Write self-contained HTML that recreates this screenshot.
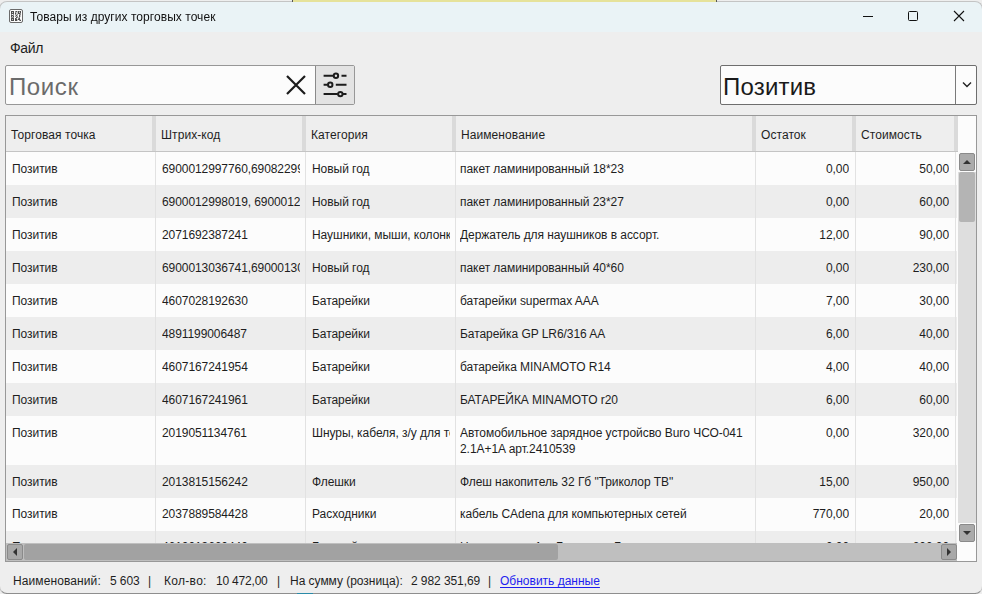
<!DOCTYPE html>
<html><head><meta charset="utf-8">
<style>
*{margin:0;padding:0;box-sizing:border-box}
html,body{width:982px;height:594px;overflow:hidden;background:#eeeeee}
body{font-family:"Liberation Sans",sans-serif;font-size:12px;color:#1e1e1e;position:relative;letter-spacing:0.08px}
.a{position:absolute}
.t{position:absolute;white-space:nowrap;line-height:14px}
.c{position:absolute;white-space:nowrap;overflow:hidden;line-height:16px}
.r{text-align:right}
.d{letter-spacing:-0.08px}
.e{letter-spacing:-0.05px}
</style></head><body>

<div class="a" style="left:0;top:0;width:982px;height:593px;background:#eeeeee;overflow:hidden">
<div class="a" style="left:0;top:0;width:982px;height:32px;background:#eaf3f6"></div>
<svg class="a" style="left:9px;top:9px" width="14" height="14" viewBox="0 0 14 14" shape-rendering="crispEdges"><rect x="0.5" y="0.5" width="13" height="13" rx="1.5" fill="#fbfbfb" stroke="#6a6a6a" shape-rendering="auto"/><rect x="2" y="2" width="1" height="1" fill="#4e4e4e"/><rect x="3" y="2" width="1" height="1" fill="#4e4e4e"/><rect x="4" y="2" width="1" height="1" fill="#4e4e4e"/><rect x="6" y="2" width="1" height="1" fill="#8c8c8c"/><rect x="7" y="2" width="1" height="1" fill="#4e4e4e"/><rect x="8" y="2" width="1" height="1" fill="#c4c4c4"/><rect x="9" y="2" width="1" height="1" fill="#4e4e4e"/><rect x="10" y="2" width="1" height="1" fill="#8c8c8c"/><rect x="11" y="2" width="1" height="1" fill="#4e4e4e"/><rect x="2" y="3" width="1" height="1" fill="#4e4e4e"/><rect x="3" y="3" width="1" height="1" fill="#c4c4c4"/><rect x="4" y="3" width="1" height="1" fill="#4e4e4e"/><rect x="6" y="3" width="1" height="1" fill="#8c8c8c"/><rect x="7" y="3" width="1" height="1" fill="#c4c4c4"/><rect x="8" y="3" width="1" height="1" fill="#c4c4c4"/><rect x="9" y="3" width="1" height="1" fill="#4e4e4e"/><rect x="10" y="3" width="1" height="1" fill="#c4c4c4"/><rect x="11" y="3" width="1" height="1" fill="#4e4e4e"/><rect x="2" y="4" width="1" height="1" fill="#4e4e4e"/><rect x="3" y="4" width="1" height="1" fill="#4e4e4e"/><rect x="4" y="4" width="1" height="1" fill="#4e4e4e"/><rect x="6" y="4" width="1" height="1" fill="#4e4e4e"/><rect x="7" y="4" width="1" height="1" fill="#c4c4c4"/><rect x="8" y="4" width="1" height="1" fill="#c4c4c4"/><rect x="9" y="4" width="1" height="1" fill="#4e4e4e"/><rect x="10" y="4" width="1" height="1" fill="#4e4e4e"/><rect x="11" y="4" width="1" height="1" fill="#8c8c8c"/><rect x="2" y="5" width="1" height="1" fill="#8c8c8c"/><rect x="4" y="5" width="1" height="1" fill="#8c8c8c"/><rect x="6" y="5" width="1" height="1" fill="#8c8c8c"/><rect x="7" y="5" width="1" height="1" fill="#c4c4c4"/><rect x="8" y="5" width="1" height="1" fill="#8c8c8c"/><rect x="10" y="5" width="1" height="1" fill="#8c8c8c"/><rect x="11" y="5" width="1" height="1" fill="#8c8c8c"/><rect x="2" y="6" width="1" height="1" fill="#4e4e4e"/><rect x="3" y="6" width="1" height="1" fill="#4e4e4e"/><rect x="4" y="6" width="1" height="1" fill="#8c8c8c"/><rect x="6" y="6" width="1" height="1" fill="#c4c4c4"/><rect x="7" y="6" width="1" height="1" fill="#4e4e4e"/><rect x="8" y="6" width="1" height="1" fill="#c4c4c4"/><rect x="10" y="6" width="1" height="1" fill="#4e4e4e"/><rect x="11" y="6" width="1" height="1" fill="#c4c4c4"/><rect x="2" y="7" width="1" height="1" fill="#4e4e4e"/><rect x="3" y="7" width="1" height="1" fill="#c4c4c4"/><rect x="4" y="7" width="1" height="1" fill="#4e4e4e"/><rect x="6" y="7" width="1" height="1" fill="#8c8c8c"/><rect x="7" y="7" width="1" height="1" fill="#c4c4c4"/><rect x="8" y="7" width="1" height="1" fill="#8c8c8c"/><rect x="10" y="7" width="1" height="1" fill="#4e4e4e"/><rect x="11" y="7" width="1" height="1" fill="#c4c4c4"/><rect x="2" y="8" width="1" height="1" fill="#8c8c8c"/><rect x="3" y="8" width="1" height="1" fill="#8c8c8c"/><rect x="4" y="8" width="1" height="1" fill="#8c8c8c"/><rect x="7" y="8" width="1" height="1" fill="#4e4e4e"/><rect x="8" y="8" width="1" height="1" fill="#8c8c8c"/><rect x="9" y="8" width="1" height="1" fill="#c4c4c4"/><rect x="10" y="8" width="1" height="1" fill="#8c8c8c"/><rect x="2" y="9" width="1" height="1" fill="#4e4e4e"/><rect x="3" y="9" width="1" height="1" fill="#4e4e4e"/><rect x="4" y="9" width="1" height="1" fill="#4e4e4e"/><rect x="6" y="9" width="1" height="1" fill="#4e4e4e"/><rect x="7" y="9" width="1" height="1" fill="#8c8c8c"/><rect x="9" y="9" width="1" height="1" fill="#8c8c8c"/><rect x="10" y="9" width="1" height="1" fill="#4e4e4e"/><rect x="2" y="10" width="1" height="1" fill="#4e4e4e"/><rect x="3" y="10" width="1" height="1" fill="#c4c4c4"/><rect x="4" y="10" width="1" height="1" fill="#4e4e4e"/><rect x="6" y="10" width="1" height="1" fill="#4e4e4e"/><rect x="7" y="10" width="1" height="1" fill="#4e4e4e"/><rect x="8" y="10" width="1" height="1" fill="#c4c4c4"/><rect x="9" y="10" width="1" height="1" fill="#4e4e4e"/><rect x="10" y="10" width="1" height="1" fill="#4e4e4e"/><rect x="11" y="10" width="1" height="1" fill="#c4c4c4"/><rect x="2" y="11" width="1" height="1" fill="#4e4e4e"/><rect x="3" y="11" width="1" height="1" fill="#4e4e4e"/><rect x="4" y="11" width="1" height="1" fill="#4e4e4e"/><rect x="6" y="11" width="1" height="1" fill="#4e4e4e"/><rect x="7" y="11" width="1" height="1" fill="#4e4e4e"/><rect x="8" y="11" width="1" height="1" fill="#c4c4c4"/><rect x="10" y="11" width="1" height="1" fill="#8c8c8c"/><rect x="11" y="11" width="1" height="1" fill="#4e4e4e"/></svg>
<div class="t" style="left:30px;top:10px;color:#111;letter-spacing:0.05px;will-change:transform">Товары из других торговых точек</div>
<div class="a" style="left:863px;top:16px;width:10px;height:1px;background:#111"></div>
<div class="a" style="left:908px;top:11px;width:10px;height:10px;border:1px solid #111;border-radius:1.5px"></div>
<svg class="a" style="left:953px;top:10px" width="12" height="12" viewBox="0 0 12 12"><path d="M1 1L11 11M11 1L1 11" stroke="#111" stroke-width="1.1"/></svg>
<div class="t" style="left:10px;top:41px;font-size:14px;letter-spacing:-0.3px">Файл</div>
<div class="a" style="left:5px;top:65px;width:350px;height:40px;background:#fcfcfc;border:1px solid #979797;border-radius:2px"></div>
<div class="a" style="left:315px;top:66px;width:39px;height:38px;background:#e3e3e3;border-left:1px solid #8a8a8a;border-radius:0 1px 1px 0"></div>
<div class="t" style="left:9px;top:73px;font-size:24px;line-height:28px;color:#6b6b6b;letter-spacing:0.6px">Поиск</div>
<svg class="a" style="left:285px;top:74px" width="22" height="22" viewBox="0 0 22 22"><path d="M2 2L20 20M20 2L2 20" stroke="#1c1c1c" stroke-width="2.2"/></svg>
<svg class="a" style="left:320px;top:70px" width="30" height="30" viewBox="0 0 30 30" fill="none" stroke="#1c1c1c" stroke-width="2">
<path d="M3.6 5.8H13.5M21.5 5.8H26.5"/><circle cx="15.95" cy="5.8" r="2.2"/>
<path d="M3.6 14.7H7.8M15.8 14.7H26.5"/><circle cx="10.25" cy="14.7" r="2.2"/>
<path d="M3.6 24.1H17.9M22.8 24.1H26.5"/><circle cx="20.35" cy="24.1" r="2.2"/>
</svg>
<div class="a" style="left:720px;top:65px;width:257px;height:40px;background:#fcfcfc;border:1px solid #6e6e6e;border-radius:2px"></div>
<div class="a" style="left:955px;top:66px;width:1px;height:38px;background:#7a7a7a"></div>
<div class="t" style="left:723px;top:73px;font-size:24px;line-height:28px;color:#1a1a1a;letter-spacing:0.2px">Позитив</div>
<svg class="a" style="left:962px;top:81px" width="10" height="8" viewBox="0 0 10 8"><path d="M1 1.5L5 5.5L9 1.5" stroke="#222" stroke-width="1.4" fill="none"/></svg>
<div class="a" style="left:5px;top:115px;width:972px;height:447px;border:1px solid #989898;background:#fcfcfc;overflow:hidden">
<div class="a" style="left:0;top:0;width:952px;height:35px;background-color:#eeeeee;background-image:repeating-conic-gradient(#e9e9e9 0 25%%, #f3f3f3 0 50%%);background-size:2px 2px"></div>
<div class="a" style="left:0;top:35px;width:952px;height:1px;background:#c4c4c4"></div>
<div class="a" style="left:146px;top:0;width:4px;height:35px;background:#dadada"></div>
<div class="a" style="left:296px;top:0;width:4px;height:35px;background:#dadada"></div>
<div class="a" style="left:446px;top:0;width:4px;height:35px;background:#dadada"></div>
<div class="a" style="left:746px;top:0;width:4px;height:35px;background:#dadada"></div>
<div class="a" style="left:846px;top:0;width:4px;height:35px;background:#dadada"></div>
<div class="a" style="left:948px;top:0;width:4px;height:35px;background:#dadada"></div>
<div class="t" style="left:5px;top:12px">Торговая точка</div>
<div class="t" style="left:155px;top:12px">Штрих-код</div>
<div class="t" style="left:305px;top:12px">Категория</div>
<div class="t" style="left:455px;top:12px">Наименование</div>
<div class="t" style="left:755px;top:12px">Остаток</div>
<div class="t" style="left:855px;top:12px">Стоимость</div>
<div class="a" style="left:0;top:36px;width:951px;height:33px;background:#fcfcfc"></div>
<div class="a" style="left:0;top:69px;width:951px;height:33px;background:#ededed"></div>
<div class="a" style="left:0;top:102px;width:951px;height:33px;background:#fcfcfc"></div>
<div class="a" style="left:0;top:135px;width:951px;height:33px;background:#ededed"></div>
<div class="a" style="left:0;top:168px;width:951px;height:33px;background:#fcfcfc"></div>
<div class="a" style="left:0;top:201px;width:951px;height:33px;background:#ededed"></div>
<div class="a" style="left:0;top:234px;width:951px;height:33px;background:#fcfcfc"></div>
<div class="a" style="left:0;top:267px;width:951px;height:33px;background:#ededed"></div>
<div class="a" style="left:0;top:300px;width:951px;height:49px;background:#fcfcfc"></div>
<div class="a" style="left:0;top:349px;width:951px;height:33px;background:#ededed"></div>
<div class="a" style="left:0;top:382px;width:951px;height:33px;background:#fcfcfc"></div>
<div class="a" style="left:0;top:415px;width:951px;height:33px;background:#ededed"></div>
<div class="a" style="left:149px;top:36px;width:1px;height:420px;background:#e2e2e2"></div>
<div class="a" style="left:299px;top:36px;width:1px;height:420px;background:#e2e2e2"></div>
<div class="a" style="left:449px;top:36px;width:1px;height:420px;background:#e2e2e2"></div>
<div class="a" style="left:749px;top:36px;width:1px;height:420px;background:#e2e2e2"></div>
<div class="a" style="left:849px;top:36px;width:1px;height:420px;background:#e2e2e2"></div>
<div class="a" style="left:949px;top:36px;width:1px;height:420px;background:#e2e2e2"></div>
<div class="c e" style="left:6px;top:45px;width:138px">Позитив</div>
<div class="c d" style="left:156px;top:45px;width:138px">6900012997760,69082299</div>
<div class="c e" style="left:306px;top:45px;width:138px">Новый год</div>
<div class="c e" style="left:454px;top:45px;width:290px">пакет ламинированный 18*23</div>
<div class="c r d" style="left:749px;top:45px;width:94px">0,00</div>
<div class="c r d" style="left:849px;top:45px;width:94px">50,00</div>
<div class="c e" style="left:6px;top:78px;width:138px">Позитив</div>
<div class="c d" style="left:156px;top:78px;width:138px">6900012998019, 690001299</div>
<div class="c e" style="left:306px;top:78px;width:138px">Новый год</div>
<div class="c e" style="left:454px;top:78px;width:290px">пакет ламинированный 23*27</div>
<div class="c r d" style="left:749px;top:78px;width:94px">0,00</div>
<div class="c r d" style="left:849px;top:78px;width:94px">60,00</div>
<div class="c e" style="left:6px;top:111px;width:138px">Позитив</div>
<div class="c d" style="left:156px;top:111px;width:138px">2071692387241</div>
<div class="c e" style="left:306px;top:111px;width:138px">Наушники, мыши, колонки</div>
<div class="c e" style="left:454px;top:111px;width:290px">Держатель для наушников в ассорт.</div>
<div class="c r d" style="left:749px;top:111px;width:94px">12,00</div>
<div class="c r d" style="left:849px;top:111px;width:94px">90,00</div>
<div class="c e" style="left:6px;top:144px;width:138px">Позитив</div>
<div class="c d" style="left:156px;top:144px;width:138px">6900013036741,69000130</div>
<div class="c e" style="left:306px;top:144px;width:138px">Новый год</div>
<div class="c e" style="left:454px;top:144px;width:290px">пакет ламинированный 40*60</div>
<div class="c r d" style="left:749px;top:144px;width:94px">0,00</div>
<div class="c r d" style="left:849px;top:144px;width:94px">230,00</div>
<div class="c e" style="left:6px;top:177px;width:138px">Позитив</div>
<div class="c d" style="left:156px;top:177px;width:138px">4607028192630</div>
<div class="c e" style="left:306px;top:177px;width:138px">Батарейки</div>
<div class="c e" style="left:454px;top:177px;width:290px">батарейки supermax AAA</div>
<div class="c r d" style="left:749px;top:177px;width:94px">7,00</div>
<div class="c r d" style="left:849px;top:177px;width:94px">30,00</div>
<div class="c e" style="left:6px;top:210px;width:138px">Позитив</div>
<div class="c d" style="left:156px;top:210px;width:138px">4891199006487</div>
<div class="c e" style="left:306px;top:210px;width:138px">Батарейки</div>
<div class="c e" style="left:454px;top:210px;width:290px">Батарейка GP LR6/316 AA</div>
<div class="c r d" style="left:749px;top:210px;width:94px">6,00</div>
<div class="c r d" style="left:849px;top:210px;width:94px">40,00</div>
<div class="c e" style="left:6px;top:243px;width:138px">Позитив</div>
<div class="c d" style="left:156px;top:243px;width:138px">4607167241954</div>
<div class="c e" style="left:306px;top:243px;width:138px">Батарейки</div>
<div class="c e" style="left:454px;top:243px;width:290px">батарейка MINAMOTO R14</div>
<div class="c r d" style="left:749px;top:243px;width:94px">4,00</div>
<div class="c r d" style="left:849px;top:243px;width:94px">40,00</div>
<div class="c e" style="left:6px;top:276px;width:138px">Позитив</div>
<div class="c d" style="left:156px;top:276px;width:138px">4607167241961</div>
<div class="c e" style="left:306px;top:276px;width:138px">Батарейки</div>
<div class="c e" style="left:454px;top:276px;width:290px">БАТАРЕЙКА MINAMOTO r20</div>
<div class="c r d" style="left:749px;top:276px;width:94px">6,00</div>
<div class="c r d" style="left:849px;top:276px;width:94px">60,00</div>
<div class="c e" style="left:6px;top:309px;width:138px">Позитив</div>
<div class="c d" style="left:156px;top:309px;width:138px">2019051134761</div>
<div class="c e" style="left:306px;top:309px;width:138px">Шнуры, кабеля, з/у для телефонов</div>
<div class="c e" style="left:454px;top:309px;width:290px">Автомобильное зарядное устройсво Buro ЧСО-041<br>2.1A+1A арт.2410539</div>
<div class="c r d" style="left:749px;top:309px;width:94px">0,00</div>
<div class="c r d" style="left:849px;top:309px;width:94px">320,00</div>
<div class="c e" style="left:6px;top:358px;width:138px">Позитив</div>
<div class="c d" style="left:156px;top:358px;width:138px">2013815156242</div>
<div class="c e" style="left:306px;top:358px;width:138px">Флешки</div>
<div class="c e" style="left:454px;top:358px;width:290px">Флеш накопитель 32 Гб "Триколор ТВ"</div>
<div class="c r d" style="left:749px;top:358px;width:94px">15,00</div>
<div class="c r d" style="left:849px;top:358px;width:94px">950,00</div>
<div class="c e" style="left:6px;top:390px;width:138px">Позитив</div>
<div class="c d" style="left:156px;top:390px;width:138px">2037889584428</div>
<div class="c e" style="left:306px;top:390px;width:138px">Расходники</div>
<div class="c e" style="left:454px;top:390px;width:290px">кабель CAdena для компьютерных сетей</div>
<div class="c r d" style="left:749px;top:390px;width:94px">770,00</div>
<div class="c r d" style="left:849px;top:390px;width:94px">20,00</div>
<div class="c e" style="left:6px;top:423px;width:138px">Позитив</div>
<div class="c d" style="left:156px;top:423px;width:138px">4610013660440</div>
<div class="c e" style="left:306px;top:423px;width:138px">Батарейки</div>
<div class="c e" style="left:454px;top:423px;width:290px">Н</div>
<div class="c r d" style="left:749px;top:423px;width:94px">0,00</div>
<div class="c r d" style="left:849px;top:423px;width:94px">200,00</div>
<div class="c" style="left:529px;top:423px">1</div>
<div class="c" style="left:550px;top:423px">Б</div>
<div class="c" style="left:608px;top:423px">Б</div>
<div class="a" style="left:951px;top:36px;width:19px;height:409px;background:#fcfcfc"></div>
<div class="a" style="left:952px;top:56px;width:18px;height:351px;background:#dedede"></div>
<div class="a" style="left:953px;top:37px;width:16px;height:18px;background:#ababab;border:1px solid #8a8a8a;border-radius:2px"></div>
<svg class="a" style="left:956px;top:43px" width="10" height="6" viewBox="0 0 10 6"><path d="M1 5L5 1L9 5Z" fill="#333"/></svg>
<div class="a" style="left:953px;top:56px;width:16px;height:50px;background:#b4b4b4;border-radius:2px"></div>
<div class="a" style="left:953px;top:408px;width:16px;height:18px;background:#ababab;border:1px solid #8a8a8a;border-radius:2px"></div>
<svg class="a" style="left:956px;top:414px" width="10" height="6" viewBox="0 0 10 6"><path d="M1 1L5 5L9 1Z" fill="#333"/></svg>
<div class="a" style="left:0;top:427px;width:951px;height:18px;background:#bfbfbf"></div>
<div class="a" style="left:1px;top:428px;width:16px;height:16px;background:#a8a8a8;border:1px solid #8a8a8a;border-radius:2px"></div>
<svg class="a" style="left:5px;top:431px" width="8" height="10" viewBox="0 0 8 10"><path d="M6 1L2 5L6 9Z" fill="#333"/></svg>
<div class="a" style="left:18px;top:428px;width:534px;height:16px;background:#a2a2a2;border-radius:2px"></div>
<div class="a" style="left:935px;top:428px;width:16px;height:16px;background:#a8a8a8;border:1px solid #8a8a8a;border-radius:2px"></div>
<svg class="a" style="left:939px;top:431px" width="8" height="10" viewBox="0 0 8 10"><path d="M2 1L6 5L2 9Z" fill="#333"/></svg>
</div>
<div class="t" style="left:13px;top:574px;letter-spacing:0.1px">Наименований:</div>
<div class="t" style="left:110px;top:574px;letter-spacing:-0.08px">5 603</div>
<div class="t" style="left:148px;top:574px;letter-spacing:0px">|</div>
<div class="t" style="left:164px;top:574px;letter-spacing:0.3px">Кол-во:</div>
<div class="t" style="left:216px;top:574px;letter-spacing:-0.2px">10 472,00</div>
<div class="t" style="left:277px;top:574px;letter-spacing:0px">|</div>
<div class="t" style="left:290px;top:574px;letter-spacing:-0.03px">На сумму (розница):</div>
<div class="t" style="left:411px;top:574px;letter-spacing:-0.08px">2 982 351,69</div>
<div class="t" style="left:488px;top:574px;letter-spacing:0px">|</div>
<div class="t" style="left:500px;top:574px;color:#1f1fee;letter-spacing:0;text-decoration:underline;text-underline-offset:2px">Обновить данные</div>
</div>
<div class="a" style="left:-1px;top:1px;width:984px;height:593px;border:1px solid #c4c4c4;border-bottom-color:#8e8e8e;border-radius:8px;box-shadow:0 0 0 12px #eeeeee"></div>
<div class="a" style="left:292px;top:0;width:1px;height:2px;background:#555"></div>
<div class="a" style="left:293px;top:0;width:423px;height:2px;background:#e6e29a"></div>
<div class="a" style="left:716px;top:0;width:1px;height:2px;background:#555"></div>
<div class="a" style="left:6px;top:593px;width:970px;height:1px;background:#8e8e8e"></div>
<div class="a" style="left:297px;top:593px;width:16px;height:1px;background:#2a8aa8"></div>
</body></html>
